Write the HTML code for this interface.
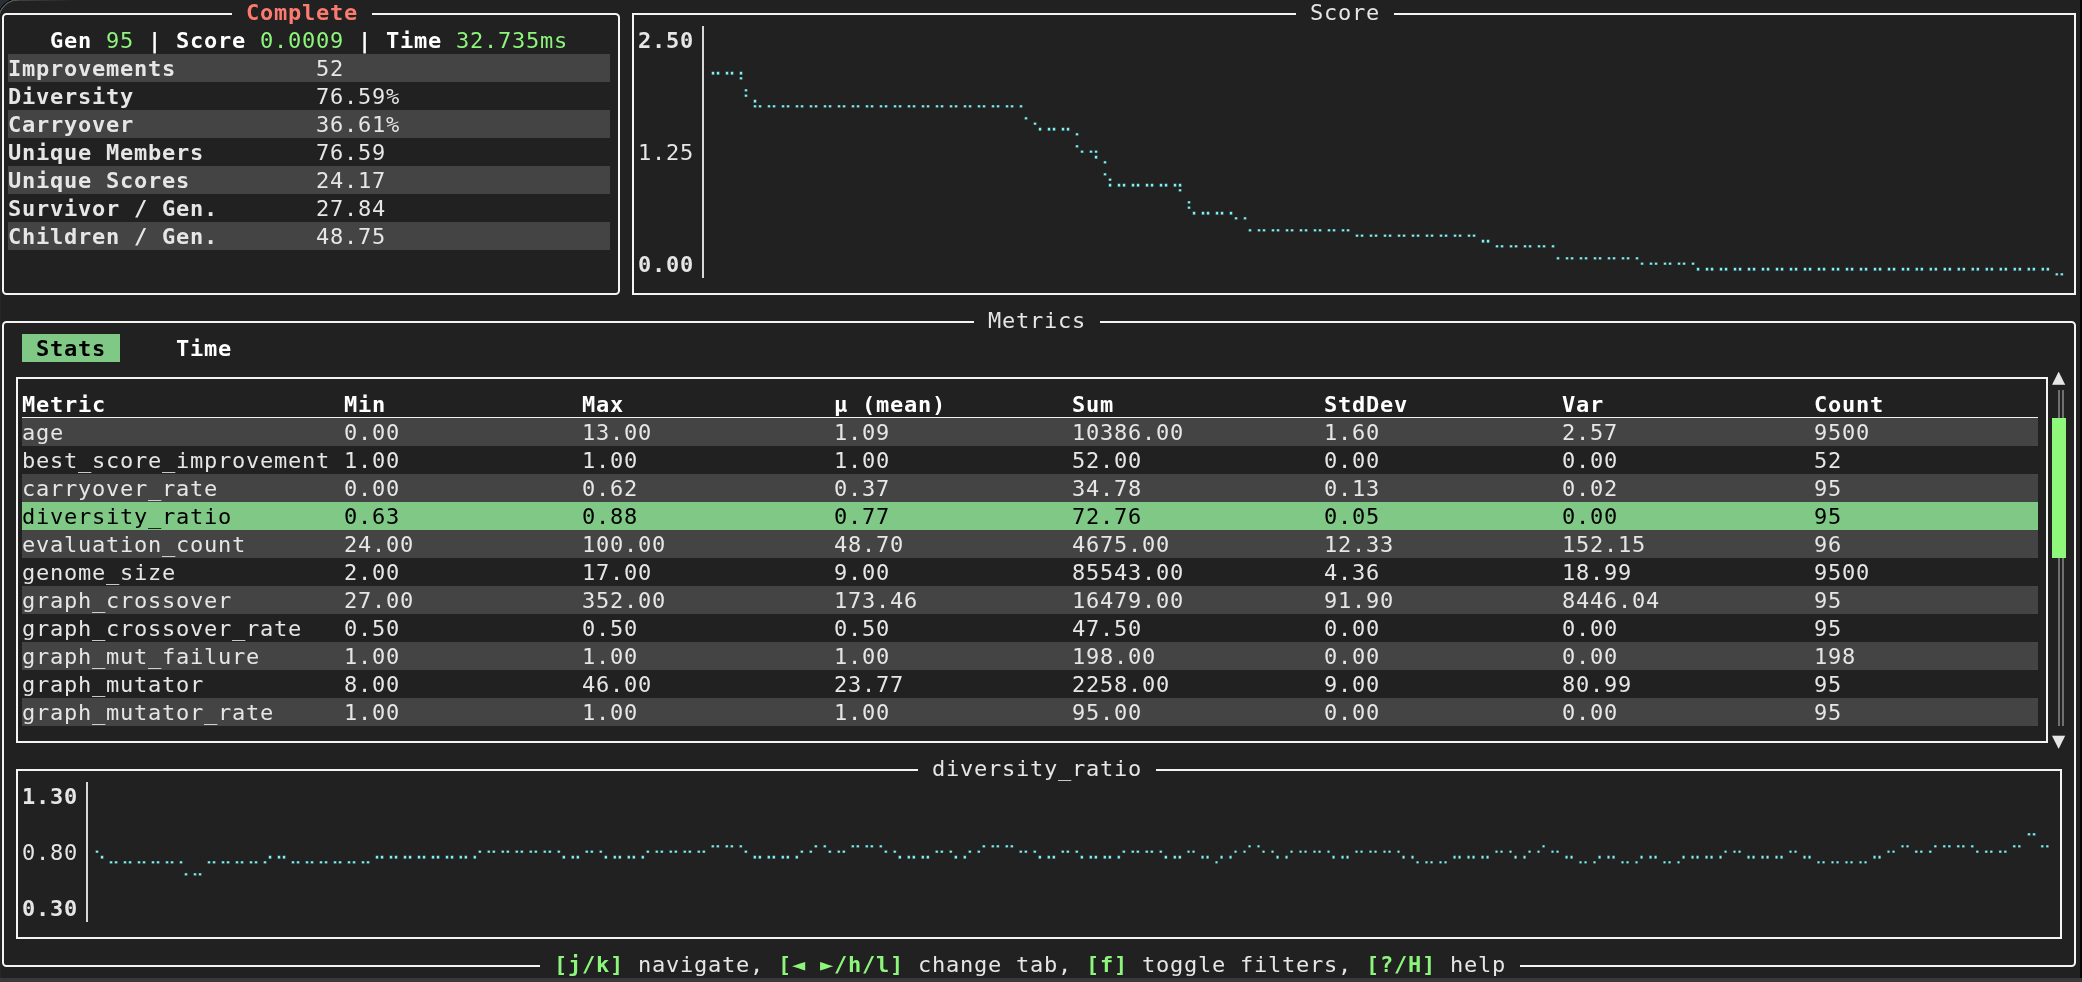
<!DOCTYPE html>
<html lang="en"><head><meta charset="utf-8"><title>Metrics dashboard</title>
<style>
html,body{margin:0;padding:0;background:#212121;}
body{width:2082px;height:982px;position:relative;overflow:hidden;
 font-family:"DejaVu Sans Mono","Liberation Mono",monospace;font-size:22px;color:#e6e6e6;}
.t{position:absolute;white-space:pre;height:28px;line-height:28px;letter-spacing:0.7549px;
 margin-top:0.7px;font-kerning:none;font-variant-ligatures:none;}
.bd{font-weight:bold;}
.wh{color:#ffffff;}
.grn{color:#8df57b;}
.red{color:#fc7b70;}
.blk{color:#000;}
.br{font-family:"DejaVu Sans",sans-serif;font-size:19.32px;letter-spacing:0.9426px;color:#7df3f3;
 margin-top:1.69px;margin-left:0.96px;transform:scaleX(0.9276);transform-origin:0 0;-webkit-text-stroke:0.35px #212121;}
.r{position:absolute;}
.b{position:absolute;border:2px solid #f4f4f4;}
.corner{position:absolute;left:0;top:0;width:18px;height:19px;
 background:radial-gradient(circle at 18px 19.2px, rgba(0,0,0,0) 0, rgba(0,0,0,0) 18.2px, #565656 18.8px, #565656 19.6px, #08080c 20.1px, #08080c 20.6px, #2a2e38 21.1px);}
#scr{position:absolute;left:0;top:0;width:2082px;height:982px;will-change:transform;}
</style></head><body>
<div id="scr">
<div class="r" style="left:8px;top:54px;width:602px;height:28px;background:#444444;"></div>
<div class="r" style="left:8px;top:110px;width:602px;height:28px;background:#444444;"></div>
<div class="r" style="left:8px;top:166px;width:602px;height:28px;background:#444444;"></div>
<div class="r" style="left:8px;top:222px;width:602px;height:28px;background:#444444;"></div>
<div class="r" style="left:22px;top:418px;width:2016px;height:28px;background:#444444;"></div>
<div class="r" style="left:22px;top:474px;width:2016px;height:28px;background:#444444;"></div>
<div class="r" style="left:22px;top:502px;width:2016px;height:28px;background:#80c886;"></div>
<div class="r" style="left:22px;top:530px;width:2016px;height:28px;background:#444444;"></div>
<div class="r" style="left:22px;top:586px;width:2016px;height:28px;background:#444444;"></div>
<div class="r" style="left:22px;top:642px;width:2016px;height:28px;background:#444444;"></div>
<div class="r" style="left:22px;top:698px;width:2016px;height:28px;background:#444444;"></div>
<div class="r" style="left:22px;top:334px;width:98px;height:28px;background:#80c886;"></div>
<div class="b" style="left:2px;top:13px;width:614px;height:278px;border-radius:4.5px;"></div>
<div class="b" style="left:632px;top:13px;width:1440px;height:278px;"></div>
<div class="b" style="left:2px;top:321px;width:2070px;height:642px;border-radius:4.5px;"></div>
<div class="b" style="left:16px;top:377px;width:2028px;height:362px;"></div>
<div class="b" style="left:16px;top:769px;width:2042px;height:166px;"></div>
<div class="r" style="left:232px;top:-2px;width:140px;height:28px;background:#212121;"></div>
<span class="t bd red" style="left:246px;top:-2px;">Complete</span>
<div class="r" style="left:1296px;top:-2px;width:98px;height:28px;background:#212121;"></div>
<span class="t " style="left:1310px;top:-2px;">Score</span>
<div class="r" style="left:974px;top:306px;width:126px;height:28px;background:#212121;"></div>
<span class="t " style="left:988px;top:306px;">Metrics</span>
<div class="r" style="left:918px;top:754px;width:238px;height:28px;background:#212121;"></div>
<span class="t " style="left:932px;top:754px;">diversity_ratio</span>
<div class="r" style="left:540px;top:950px;width:980px;height:28px;background:#212121;"></div>
<span class="t bd grn" style="left:554px;top:950px;">[j/k]</span>
<span class="t " style="left:624px;top:950px;"> navigate, </span>
<span class="t bd grn" style="left:778px;top:950px;">[◄ ►/h/l]</span>
<span class="t " style="left:904px;top:950px;"> change tab, </span>
<span class="t bd grn" style="left:1086px;top:950px;">[f]</span>
<span class="t " style="left:1128px;top:950px;"> toggle filters, </span>
<span class="t bd grn" style="left:1366px;top:950px;">[?/H]</span>
<span class="t " style="left:1436px;top:950px;"> help</span>
<span class="t bd wh" style="left:50px;top:26px;">Gen </span>
<span class="t grn" style="left:106px;top:26px;">95</span>
<span class="t bd wh" style="left:134px;top:26px;"> | </span>
<span class="t bd wh" style="left:176px;top:26px;">Score </span>
<span class="t grn" style="left:260px;top:26px;">0.0009</span>
<span class="t bd wh" style="left:344px;top:26px;"> | </span>
<span class="t bd wh" style="left:386px;top:26px;">Time </span>
<span class="t grn" style="left:456px;top:26px;">32.735ms</span>
<span class="t bd" style="left:8px;top:54px;">Improvements</span>
<span class="t " style="left:316px;top:54px;">52</span>
<span class="t bd" style="left:8px;top:82px;">Diversity</span>
<span class="t " style="left:316px;top:82px;">76.59%</span>
<span class="t bd" style="left:8px;top:110px;">Carryover</span>
<span class="t " style="left:316px;top:110px;">36.61%</span>
<span class="t bd" style="left:8px;top:138px;">Unique Members</span>
<span class="t " style="left:316px;top:138px;">76.59</span>
<span class="t bd" style="left:8px;top:166px;">Unique Scores</span>
<span class="t " style="left:316px;top:166px;">24.17</span>
<span class="t bd" style="left:8px;top:194px;">Survivor / Gen.</span>
<span class="t " style="left:316px;top:194px;">27.84</span>
<span class="t bd" style="left:8px;top:222px;">Children / Gen.</span>
<span class="t " style="left:316px;top:222px;">48.75</span>
<span class="t bd" style="left:638px;top:26px;">2.50</span>
<span class="t " style="left:638px;top:138px;">1.25</span>
<span class="t bd" style="left:638px;top:250px;">0.00</span>
<div class="r" style="left:702px;top:26px;width:2px;height:252px;background:#d8d8d8;"></div>
<span class="t br" style="left:708px;top:54px">⠤⠤⡄</span>
<span class="t br" style="left:736px;top:82px">⠘⣄⣀⣀⣀⣀⣀⣀⣀⣀⣀⣀⣀⣀⣀⣀⣀⣀⣀⣀⡀</span>
<span class="t br" style="left:1016px;top:110px">⠈⠢⠤⠤⡀</span>
<span class="t br" style="left:1072px;top:138px">⠑⠲⡀</span>
<span class="t br" style="left:1100px;top:166px">⠱⠤⠤⠤⠤⢤</span>
<span class="t br" style="left:1184px;top:194px">⠣⠤⠤⢄⡀</span>
<span class="t br" style="left:1240px;top:222px">⠈⠉⠉⠉⠉⠉⠉⠉⠒⠒⠒⠒⠒⠒⠒⠒⠒⠤⣀⣀⣀⣀⡀</span>
<span class="t br" style="left:1548px;top:250px">⠈⠉⠉⠉⠉⠉⠑⠒⠒⠒⠢⠤⠤⠤⠤⠤⠤⠤⠤⠤⠤⠤⠤⠤⠤⠤⠤⠤⠤⠤⠤⠤⠤⠤⠤⠤⣀</span>
<span class="t br" style="left:2024px;top:810px">⣀</span>
<span class="t br" style="left:92px;top:838px">⠢⣀⣀⣀⣀⣀⡀⠀⣀⣀⣀⣀⡠⠤⣀⣀⣀⣀⣀⣀⠤⠤⠤⠤⠤⠤⠤⠔⠒⠒⠒⠒⠒⠢⠤⠒⠢⠤⠤⠔⠒⠒⠒⠒⠉⠉⠑⠤⠤⠤⠔⠊⠑⠒⠉⠉⠑⠢⠤⠤⠒⠢⠔⠊⠉⠉⠒⠢⠤⠒⠢⠤⠤⠔⠒⠒⠢⠤⠒⠤⡠⠔⠊⠑⠢⠔⠒⠒⠢⠤⠒⠒⠒⠢⢄⣀⣀⠤⠤⠤⠒⠢⠔⠊⠒⠤⣀⡠⠤⣀⡠⠤⣀⡠⠤⠤⠔⠒⠤⠤⠤⠒⠤⣀⣀⣀⣀⠤⠒⠉⠒⠊⠉⠉⠑⠒⠒⠉⠀⠉</span>
<span class="t br" style="left:176px;top:866px">⠈⠉</span>
<span class="t bd" style="left:22px;top:782px;">1.30</span>
<span class="t " style="left:22px;top:838px;">0.80</span>
<span class="t bd" style="left:22px;top:894px;">0.30</span>
<div class="r" style="left:86px;top:782px;width:2px;height:140px;background:#d8d8d8;"></div>
<span class="t bd blk" style="left:36px;top:334px;">Stats</span>
<span class="t bd wh" style="left:176px;top:334px;">Time</span>
<span class="t bd wh" style="left:22px;top:390px;">Metric</span>
<span class="t bd wh" style="left:344px;top:390px;">Min</span>
<span class="t bd wh" style="left:582px;top:390px;">Max</span>
<span class="t bd wh" style="left:834px;top:390px;">μ (mean)</span>
<span class="t bd wh" style="left:1072px;top:390px;">Sum</span>
<span class="t bd wh" style="left:1324px;top:390px;">StdDev</span>
<span class="t bd wh" style="left:1562px;top:390px;">Var</span>
<span class="t bd wh" style="left:1814px;top:390px;">Count</span>
<div class="r" style="left:22px;top:416.5px;width:2016px;height:1.3px;background:#f0f0f0;"></div>
<span class="t " style="left:22px;top:418px;">age</span>
<span class="t " style="left:344px;top:418px;">0.00</span>
<span class="t " style="left:582px;top:418px;">13.00</span>
<span class="t " style="left:834px;top:418px;">1.09</span>
<span class="t " style="left:1072px;top:418px;">10386.00</span>
<span class="t " style="left:1324px;top:418px;">1.60</span>
<span class="t " style="left:1562px;top:418px;">2.57</span>
<span class="t " style="left:1814px;top:418px;">9500</span>
<span class="t " style="left:22px;top:446px;">best_score_improvement</span>
<span class="t " style="left:344px;top:446px;">1.00</span>
<span class="t " style="left:582px;top:446px;">1.00</span>
<span class="t " style="left:834px;top:446px;">1.00</span>
<span class="t " style="left:1072px;top:446px;">52.00</span>
<span class="t " style="left:1324px;top:446px;">0.00</span>
<span class="t " style="left:1562px;top:446px;">0.00</span>
<span class="t " style="left:1814px;top:446px;">52</span>
<span class="t " style="left:22px;top:474px;">carryover_rate</span>
<span class="t " style="left:344px;top:474px;">0.00</span>
<span class="t " style="left:582px;top:474px;">0.62</span>
<span class="t " style="left:834px;top:474px;">0.37</span>
<span class="t " style="left:1072px;top:474px;">34.78</span>
<span class="t " style="left:1324px;top:474px;">0.13</span>
<span class="t " style="left:1562px;top:474px;">0.02</span>
<span class="t " style="left:1814px;top:474px;">95</span>
<span class="t blk" style="left:22px;top:502px;">diversity_ratio</span>
<span class="t blk" style="left:344px;top:502px;">0.63</span>
<span class="t blk" style="left:582px;top:502px;">0.88</span>
<span class="t blk" style="left:834px;top:502px;">0.77</span>
<span class="t blk" style="left:1072px;top:502px;">72.76</span>
<span class="t blk" style="left:1324px;top:502px;">0.05</span>
<span class="t blk" style="left:1562px;top:502px;">0.00</span>
<span class="t blk" style="left:1814px;top:502px;">95</span>
<span class="t " style="left:22px;top:530px;">evaluation_count</span>
<span class="t " style="left:344px;top:530px;">24.00</span>
<span class="t " style="left:582px;top:530px;">100.00</span>
<span class="t " style="left:834px;top:530px;">48.70</span>
<span class="t " style="left:1072px;top:530px;">4675.00</span>
<span class="t " style="left:1324px;top:530px;">12.33</span>
<span class="t " style="left:1562px;top:530px;">152.15</span>
<span class="t " style="left:1814px;top:530px;">96</span>
<span class="t " style="left:22px;top:558px;">genome_size</span>
<span class="t " style="left:344px;top:558px;">2.00</span>
<span class="t " style="left:582px;top:558px;">17.00</span>
<span class="t " style="left:834px;top:558px;">9.00</span>
<span class="t " style="left:1072px;top:558px;">85543.00</span>
<span class="t " style="left:1324px;top:558px;">4.36</span>
<span class="t " style="left:1562px;top:558px;">18.99</span>
<span class="t " style="left:1814px;top:558px;">9500</span>
<span class="t " style="left:22px;top:586px;">graph_crossover</span>
<span class="t " style="left:344px;top:586px;">27.00</span>
<span class="t " style="left:582px;top:586px;">352.00</span>
<span class="t " style="left:834px;top:586px;">173.46</span>
<span class="t " style="left:1072px;top:586px;">16479.00</span>
<span class="t " style="left:1324px;top:586px;">91.90</span>
<span class="t " style="left:1562px;top:586px;">8446.04</span>
<span class="t " style="left:1814px;top:586px;">95</span>
<span class="t " style="left:22px;top:614px;">graph_crossover_rate</span>
<span class="t " style="left:344px;top:614px;">0.50</span>
<span class="t " style="left:582px;top:614px;">0.50</span>
<span class="t " style="left:834px;top:614px;">0.50</span>
<span class="t " style="left:1072px;top:614px;">47.50</span>
<span class="t " style="left:1324px;top:614px;">0.00</span>
<span class="t " style="left:1562px;top:614px;">0.00</span>
<span class="t " style="left:1814px;top:614px;">95</span>
<span class="t " style="left:22px;top:642px;">graph_mut_failure</span>
<span class="t " style="left:344px;top:642px;">1.00</span>
<span class="t " style="left:582px;top:642px;">1.00</span>
<span class="t " style="left:834px;top:642px;">1.00</span>
<span class="t " style="left:1072px;top:642px;">198.00</span>
<span class="t " style="left:1324px;top:642px;">0.00</span>
<span class="t " style="left:1562px;top:642px;">0.00</span>
<span class="t " style="left:1814px;top:642px;">198</span>
<span class="t " style="left:22px;top:670px;">graph_mutator</span>
<span class="t " style="left:344px;top:670px;">8.00</span>
<span class="t " style="left:582px;top:670px;">46.00</span>
<span class="t " style="left:834px;top:670px;">23.77</span>
<span class="t " style="left:1072px;top:670px;">2258.00</span>
<span class="t " style="left:1324px;top:670px;">9.00</span>
<span class="t " style="left:1562px;top:670px;">80.99</span>
<span class="t " style="left:1814px;top:670px;">95</span>
<span class="t " style="left:22px;top:698px;">graph_mutator_rate</span>
<span class="t " style="left:344px;top:698px;">1.00</span>
<span class="t " style="left:582px;top:698px;">1.00</span>
<span class="t " style="left:834px;top:698px;">1.00</span>
<span class="t " style="left:1072px;top:698px;">95.00</span>
<span class="t " style="left:1324px;top:698px;">0.00</span>
<span class="t " style="left:1562px;top:698px;">0.00</span>
<span class="t " style="left:1814px;top:698px;">95</span>
<span class="t " style="left:2052px;top:362px;">▲</span>
<span class="t " style="left:2052px;top:726px;">▼</span>
<div class="r" style="left:2058px;top:390px;width:2px;height:28px;background:#707070;"></div>
<div class="r" style="left:2062px;top:390px;width:2px;height:28px;background:#707070;"></div>
<div class="r" style="left:2058px;top:558px;width:2px;height:168px;background:#707070;"></div>
<div class="r" style="left:2062px;top:558px;width:2px;height:168px;background:#707070;"></div>
<div class="r" style="left:2052px;top:418px;width:14px;height:140px;background:#8ff77a;"></div>
<div class="r" style="left:2080px;top:0px;width:2px;height:982px;background:#060606;"></div>
<div class="r" style="left:0px;top:978px;width:2082px;height:4px;background:#39393b;"></div>
<div class="corner"></div>
<div class="r" style="left:18px;top:0px;width:60px;height:1px;background:transparent;background:linear-gradient(to right, rgba(90,90,90,0.6), rgba(90,90,90,0));"></div>
<div class="r" style="left:0px;top:19px;width:1px;height:959px;background:rgba(255,255,255,0.035);"></div>
</div>
</body></html>
